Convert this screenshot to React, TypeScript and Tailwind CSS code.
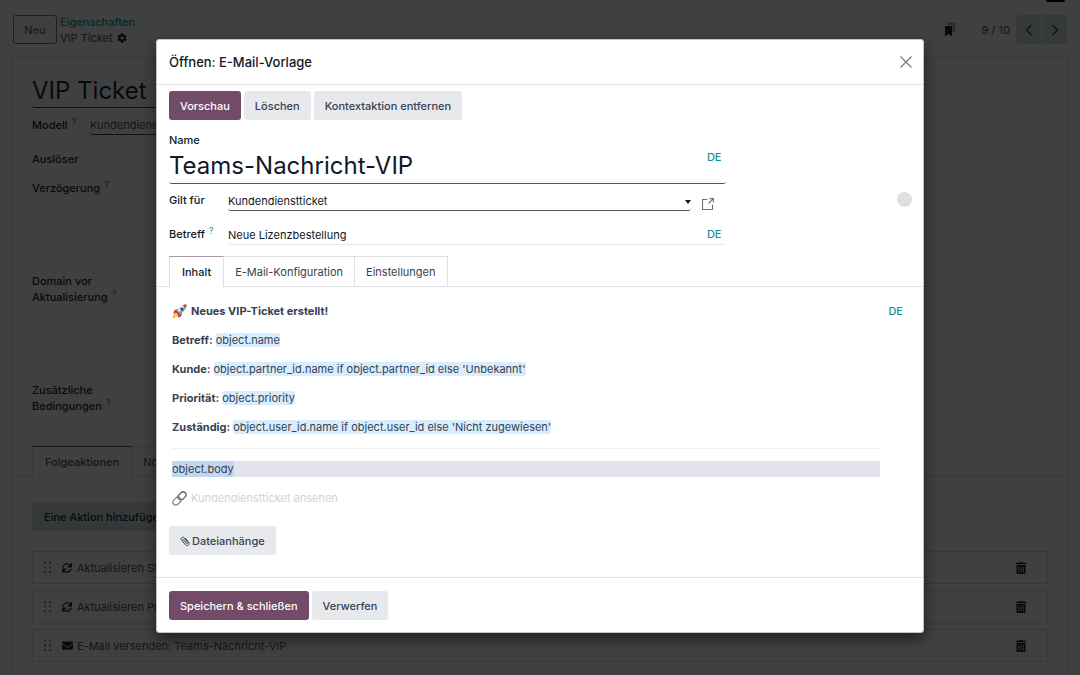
import { useState } from "react";
import type { ReactNode } from "react";
import { FaCog, FaEnvelope, FaSync, FaTrashAlt } from "react-icons/fa";

function Hint() {
  return <sup className="relative -top-1 ml-1 text-[9px] leading-none font-medium text-[#0fa5b5]">?</sup>;
}

function ActionRow({ icon, text }: { icon: ReactNode; text: string }) {
  return (
    <li className="flex h-[33px] items-center border border-[#dcdfe3] pr-5 pl-[11px]">
      <svg viewBox="0 0 8 12" className="h-3 w-2 text-[#8a8f98]" fill="currentColor" aria-hidden="true">
        <path d="M0 0h2v2H0zM0 4.5h2v2H0zM0 9h2v2H0zM5 0h2v2H5zM5 4.5h2v2H5zM5 9h2v2H5z" />
      </svg>
      <span className="ml-[10px] flex w-[15px] text-[10px] text-[#1f2937]">{icon}</span>
      <span className="flex-1">{text}</span>
      <button type="button" aria-label="Aktion entfernen" className="text-xs text-[#1f2937]">
        <FaTrashAlt />
      </button>
    </li>
  );
}

const pagerButton = "flex h-[29px] w-[25px] items-center justify-center bg-[#d4e3e8]";

function Background() {
  return (
    <div className="flex min-h-screen flex-col bg-[#f8f9fa] text-[11px] leading-4 text-[#4b5563]">
      <header className="relative flex h-[58px] shrink-0 items-center border-b border-[#e0e2e6] bg-white pt-[2px] pr-[13px] pl-[13px]">
        <span className="absolute top-0 right-[15px] h-[2px] w-[19px] rounded-b-[3px] bg-black" />
        <button type="button" className="h-[29px] w-11 rounded-[3px] border border-[#8a6880] font-medium text-[#8a6880]">
          Neu
        </button>
        <div className="ml-[3px]">
          <a href="#eigenschaften" className="block font-medium text-[#00a8a0]">Eigenschaften</a>
          <div className="flex items-center gap-1">
            VIP Ticket
            <FaCog className="text-[10px] text-[#1f2937]" />
          </div>
        </div>
        <svg viewBox="0 0 12 15" className="ml-auto h-[15px] w-3" aria-hidden="true">
          <path d="M3.5 0.5H11v11L8.500 9.500V3H3.500z" fill="#9ca3af" />
          <path d="M1 4h7v10.500L4.500 12 1 14.500z" fill="#1f2937" />
        </svg>
        <span className="ml-[26px]">9 / 10</span>
        <div className="ml-[6px] flex gap-px">
          <button type="button" aria-label="Zurück" className={`${pagerButton} rounded-l-[3px]`}>
            <svg viewBox="0 0 8 12" className="h-3 w-2" fill="none" stroke="#374151" strokeWidth="1.4"><path d="M6.5 1 1.5 6l5 5" /></svg>
          </button>
          <button type="button" aria-label="Weiter" className={`${pagerButton} rounded-r-[3px]`}>
            <svg viewBox="0 0 8 12" className="h-3 w-2" fill="none" stroke="#374151" strokeWidth="1.4"><path d="m1.5 1 5 5-5 5" /></svg>
          </button>
        </div>
      </header>
      <main className="mx-3 flex-1 border-x border-[#e0e2e6] bg-white">
        <div className="px-[19px] pt-[19px] text-[#1f2937]">
          <div className="h-[31px] w-80 rounded-b-[3px] border-b border-[#374151] text-2xl leading-7">VIP Ticket</div>
          <div className="mt-[9px] flex">
            <span className="w-[58px] font-medium">Modell<Hint /></span>
            <span className="h-[18px] w-64 rounded-b-[3px] border-b border-[#374151] text-[#4b5563]">Kundendienstticket</span>
          </div>
          <div className="mt-4 font-medium">Auslöser</div>
          <div className="mt-[13px] font-medium">Verzögerung<Hint /></div>
          <div className="mt-[77px] w-24 font-medium">Domain vor Aktualisierung<Hint /></div>
          <div className="mt-[77px] w-24 font-medium">Zusätzliche Bedingungen<Hint /></div>
        </div>
        <div className="mt-8 flex h-[31px] border-b border-[#dcdfe3] pl-[19px]">
          <button type="button" className="h-[31px] border-x border-t border-x-[#dcdfe3] border-t-[#714b67] bg-white px-3 font-medium">Folgeaktionen</button>
          <button type="button" className="h-[30px] border-t border-r border-[#dcdfe3] px-[11px]">Notiz</button>
        </div>
        <div className="px-[19px] pt-[25px]">
          <button type="button" className="h-[29px] rounded-[3px] bg-[#d4e3e8] px-3 font-medium text-[#1f2937]">Eine Aktion hinzufügen</button>
          <ul className="mt-5 flex flex-col gap-[6px]">
            <ActionRow icon={<FaSync />} text="Aktualisieren Stufe" />
            <ActionRow icon={<FaSync />} text="Aktualisieren Priorität" />
            <ActionRow icon={<FaEnvelope className="text-[11px]" />} text="E-Mail versenden: Teams-Nachricht-VIP" />
          </ul>
        </div>
      </main>
    </div>
  );
}

function Rocket() {
  return (
    <svg viewBox="0 0 28 28" className="h-[15px] w-[15px] shrink-0" aria-hidden="true">
      <path d="m9 15-5 2-3 10 9-4 4-4z" fill="#f59a23" />
      <path d="m8 17-3 2-2 6 6-3 2-3z" fill="#ffdc3c" />
      <path d="M12 9 5 11l-3 6 9-1zM19 17l-2 6-6 3 1-8z" fill="#e0342b" />
      <path d="M27 1c-7 0-14 4-19 13l6 6C23 15 27 8 27 1z" fill="#8fa3b3" />
      <path d="M27 1c-7 0-13 4-17 10l4 4z" fill="#dfe8ee" />
      <path d="M27 1c-3 0-5 .5-7 1.500L25.500 8C26.500 6 27 4 27 1z" fill="#d93a2f" />
      <circle cx="18.500" cy="9.500" r="3" fill="#24537f" />
      <path d="m9 13 6 6-3 1-4-4z" fill="#4d5963" />
    </svg>
  );
}

function Chain() {
  return (
    <svg viewBox="0 0 14 14" className="h-[15px] w-[15px] shrink-0" fill="none" strokeLinecap="round" aria-hidden="true">
      <g transform="rotate(-45 7 7)">
        <rect x="-0.500" y="4.300" width="8.300" height="5.400" rx="2.700" stroke="#7b868e" strokeWidth="1.200" />
        <rect x="6.200" y="4.300" width="8.300" height="5.400" rx="2.700" stroke="#56616a" strokeWidth="1.200" />
      </g>
    </svg>
  );
}

function Paperclip() {
  return (
    <svg viewBox="0 0 10 10" className="h-[10px] w-[10px]" fill="none" stroke="#374151" strokeWidth="1" strokeLinecap="round" aria-hidden="true">
      <path d="M3 3.200 6.300 7.200c.9.8 1.900-.2 1.100-1.100L4.200 1.900C2.600.1.100 2.200 1.500 4l3.900 4.800c2 1.900 4.900-.4 3.300-2.500L5.600 2.400" />
    </svg>
  );
}

const primary = "h-[29px] rounded-[3px] bg-[#714b67] px-[11px] font-medium text-white";
const secondary = "h-[29px] rounded-[3px] bg-[#e7e9ed] px-[11px] font-medium text-[#374151]";
const language = "font-medium text-[#168f93]";

const lines = [
  { label: "Betreff:", code: "object.name" },
  { label: "Kunde:", code: "object.partner_id.name if object.partner_id else 'Unbekannt'" },
  { label: "Priorität:", code: "object.priority" },
  { label: "Zuständig:", code: "object.user_id.name if object.user_id else 'Nicht zugewiesen'" },
];

const tabs = ["Inhalt", "E-Mail-Konfiguration", "Einstellungen"];

function TemplateDialog() {
  const [active, setActive] = useState("Inhalt");
  return (
    <section
      role="dialog"
      aria-modal="true"
      aria-labelledby="dialog-title"
      className="w-full max-w-3xl rounded-[3px] border border-[#c4c4c4] bg-white text-[11px] leading-4 text-[#374151] shadow-[0_6px_14px_rgba(0,0,0,0.5)]"
    >
      <header className="flex h-[45px] items-center justify-between border-b border-[#dee0e3] pr-[10px] pb-px pl-3">
        <h1 id="dialog-title" className="text-[13px] font-medium text-[#111827]">Öffnen: E-Mail-Vorlage</h1>
        <button type="button" aria-label="Schließen" className="p-px">
          <svg viewBox="0 0 12 12" className="h-3 w-3" stroke="#7d7d7d" strokeWidth="1.300"><path d="m.5.5 11 11M11.500.5l-11 11" /></svg>
        </button>
      </header>
      <div className="flex gap-[3px] px-3 pt-[6px]">
        <button type="button" className={primary}>Vorschau</button>
        <button type="button" className={secondary}>Löschen</button>
        <button type="button" className={secondary}>Kontextaktion entfernen</button>
      </div>
      <div className="flex items-start px-3 pt-3 text-[#111827]">
        <div className="w-3/4 max-w-[557px]">
          <label htmlFor="name" className="block font-medium">Name</label>
          <div className="flex h-9 rounded-[3px] border-b border-[#4b5563]">
            <input id="name" defaultValue="Teams-Nachricht-VIP" className="min-w-0 flex-1 bg-transparent text-2xl outline-none" />
            <button type="button" className={`${language} mt-px mr-1 h-4`}>DE</button>
          </div>
          <div className="mt-2 flex items-start">
            <label htmlFor="model" className="w-[59px] font-medium">Gilt für</label>
            <div className="relative h-[19px] flex-1 rounded-[3px] border-b border-[#4b5563]">
              <select id="model" className="h-[18px] w-full appearance-none bg-transparent outline-none">
                <option>Kundendienstticket</option>
              </select>
              <svg viewBox="0 0 6 4" className="pointer-events-none absolute top-2 right-0 h-1 w-[6px]" fill="#111827"><path d="M0 0h6L3 4z" /></svg>
            </div>
            <button type="button" aria-label="Datensatz öffnen" className="mt-[6px] mr-3 ml-[11px]">
              <svg viewBox="0 0 12 12" className="h-3 w-3" fill="none" stroke="#6b7280" strokeWidth="1.100"><path d="M5.500 1.500h-5v10h10v-5M7.500.6h3.900v3.900M11.400.6 6.500 5.500" /></svg>
            </button>
          </div>
          <div className="mt-[15px] flex items-start">
            <label htmlFor="subject" className="w-[59px] font-medium">Betreff<Hint /></label>
            <div className="flex h-[19px] flex-1 rounded-[3px] border-b border-[#e5e7eb]">
              <input id="subject" defaultValue="Neue Lizenzbestellung" className="h-[18px] min-w-0 flex-1 bg-transparent outline-none" />
              <button type="button" className={`${language} mr-1 h-4`}>DE</button>
            </div>
          </div>
        </div>
        <span className="mt-[60px] -mr-px ml-auto h-[15px] w-[15px] rounded-full bg-[#dfdfdf]" />
      </div>
      <div role="tablist" className="mt-[11px] flex h-[31px] border-b border-[#dee0e3] px-3">
        {tabs.map((tab) => (
          <button
            key={tab}
            type="button"
            role="tab"
            aria-selected={tab === active}
            onClick={() => setActive(tab)}
            className={
              tab === active
                ? "h-[31px] border-x border-t border-x-[#dee0e3] border-t-[#b094a8] bg-white px-3 font-medium text-[#111827]"
                : "h-[30px] border-t border-r border-[#dee0e3] px-[11px]"
            }
          >
            {tab}
          </button>
        ))}
      </div>
      <div className="flex items-start justify-between pt-4 pr-5 pl-[15px]">
        <div className="min-w-0 flex-1">
          <p className="flex items-center gap-1 font-bold"><Rocket />Neues VIP-Ticket erstellt!</p>
          {lines.map((line) => (
            <p key={line.label} className="mt-[13px]">
              <strong>{line.label}</strong> <span className="rounded-[2px] bg-[#d8edfd]">{line.code}</span>
            </p>
          ))}
        </div>
        <button type="button" className={language}>DE</button>
      </div>
      <div className="pr-[43px] pl-[15px]">
        <hr className="mt-[13px] border-[#f0f1f3]" />
        <p className="mt-3 bg-[#e3e3ee]"><span className="inline-block bg-[#c3d7f0]">object.body</span></p>
        <p className="mt-[13px] flex items-center gap-1 text-[#d3d3d3]"><Chain />Kundendienstticket ansehen</p>
      </div>
      <div className="px-3 pt-5 pb-[22px]">
        <button type="button" className={`${secondary} flex items-center gap-[2px]`}><Paperclip />Dateianhänge</button>
      </div>
      <footer className="flex gap-[3px] border-t border-[#dee0e3] px-3 pt-[13px] pb-3">
        <button type="button" className={primary}>Speichern &amp; schließen</button>
        <button type="button" className={secondary}>Verwerfen</button>
      </footer>
    </section>
  );
}

export default function App() {
  return (
    <div className="relative h-screen overflow-hidden font-['Inter',sans-serif]">
      <Background />
      <div className="absolute inset-0 flex items-start justify-center bg-black/75 pt-[39px]">
        <TemplateDialog />
      </div>
    </div>
  );
}
